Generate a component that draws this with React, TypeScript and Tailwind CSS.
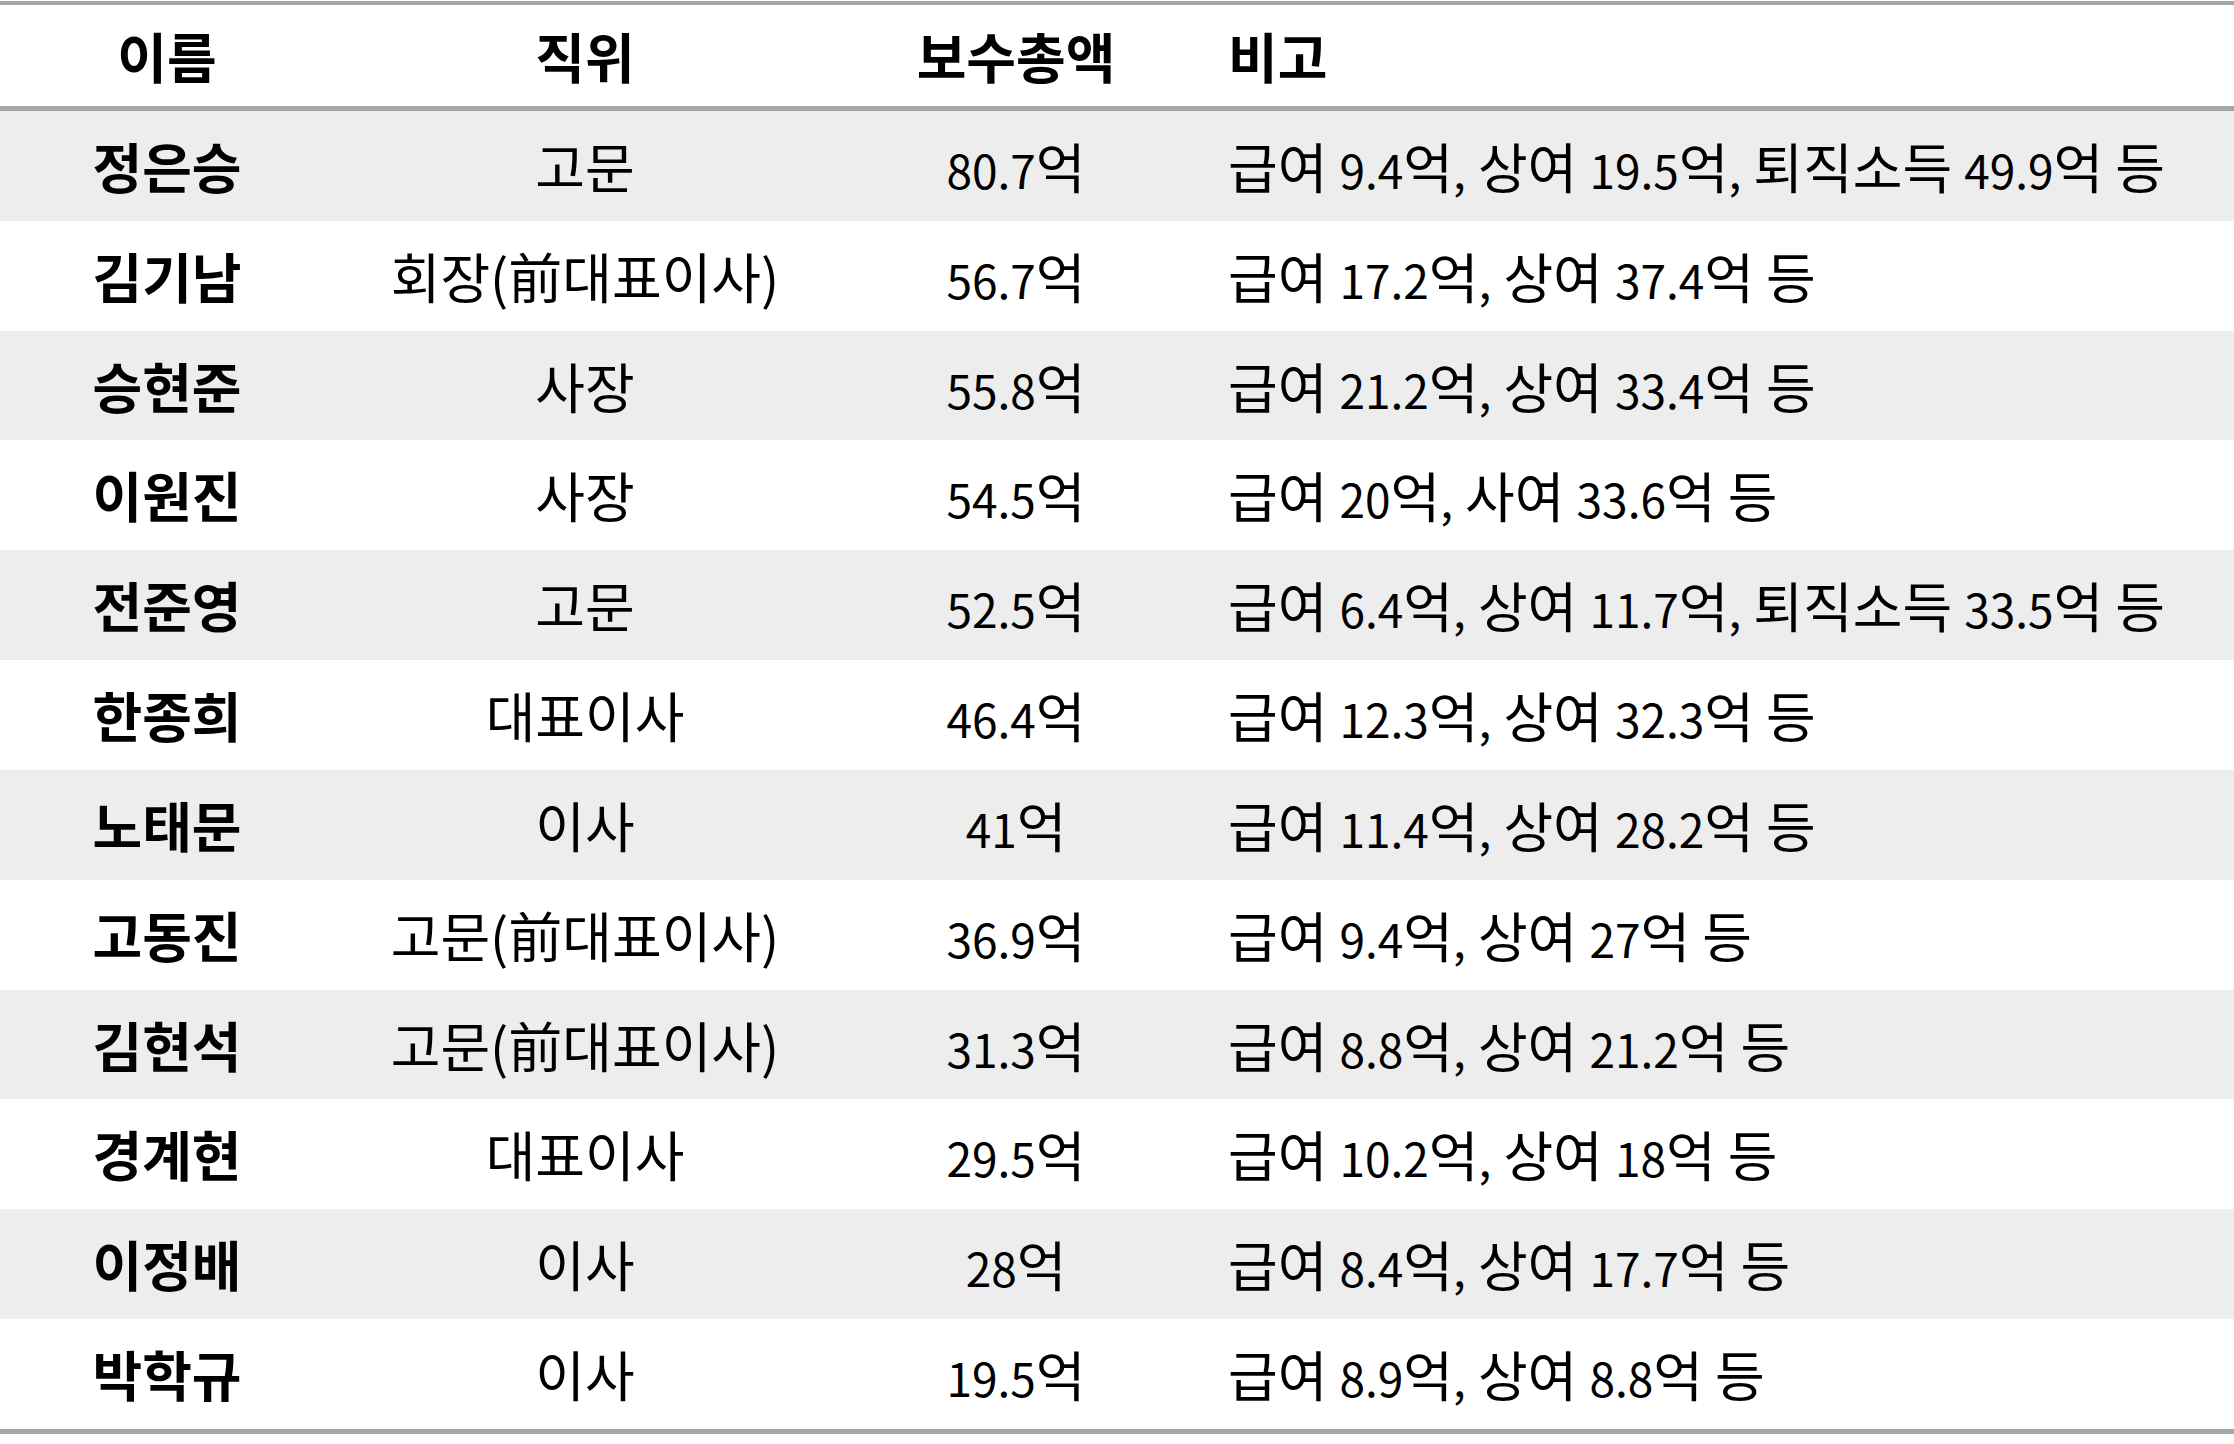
import React from 'react';

const rows = [
    { name: '정은승', title: '고문', total: '80.7억', note: '급여 9.4억, 상여 19.5억, 퇴직소득 49.9억 등' },
    { name: '김기남', title: '회장(前대표이사)', total: '56.7억', note: '급여 17.2억, 상여 37.4억 등' },
    { name: '승현준', title: '사장', total: '55.8억', note: '급여 21.2억, 상여 33.4억 등' },
    { name: '이원진', title: '사장', total: '54.5억', note: '급여 20억, 사여 33.6억 등' },
    { name: '전준영', title: '고문', total: '52.5억', note: '급여 6.4억, 상여 11.7억, 퇴직소득 33.5억 등' },
    { name: '한종희', title: '대표이사', total: '46.4억', note: '급여 12.3억, 상여 32.3억 등' },
    { name: '노태문', title: '이사', total: '41억', note: '급여 11.4억, 상여 28.2억 등' },
    { name: '고동진', title: '고문(前대표이사)', total: '36.9억', note: '급여 9.4억, 상여 27억 등' },
    { name: '김현석', title: '고문(前대표이사)', total: '31.3억', note: '급여 8.8억, 상여 21.2억 등' },
    { name: '경계현', title: '대표이사', total: '29.5억', note: '급여 10.2억, 상여 18억 등' },
    { name: '이정배', title: '이사', total: '28억', note: '급여 8.4억, 상여 17.7억 등' },
    { name: '박학규', title: '이사', total: '19.5억', note: '급여 8.9억, 상여 8.8억 등' },
];

const cols = 'grid grid-cols-[334px_502px_360px_1fr] items-center';

// digits in the source are set in a narrower latin face than the hangul
function Mixed({ text }: { text: string }) {
    const parts = text.split(/([0-9.,]+)/);
    return (
        <>
            {parts.map((p, i) =>
                /^[0-9.,]+$/.test(p) ? (
                    <span key={i} className="text-[46px]">{p}</span>
                ) : (
                    <React.Fragment key={i}>{p}</React.Fragment>
                )
            )}
        </>
    );
}

export default function App() {
    return (
        <div className="w-[2234px] h-[1444px] bg-white pt-px text-black text-[54px] leading-none font-['Noto_Sans_CJK_KR','Noto_Sans',sans-serif]">
            <div className="border-t-[4px] border-b-[5px] border-[#a6a6a6]">
                {/* header */}
                <div className={`${cols} h-[106px] font-bold border-b-[5px] border-[#a6a6a6]`}>
                    <div className="text-center">이름</div>
                    <div className="text-center">직위</div>
                    <div className="text-center">보수총액</div>
                    <div className="pl-8">비고</div>
                </div>

                {rows.map((row, i) => (
                    <div
                        key={row.name}
                        className={`${cols} h-[109.83px] ${i % 2 === 0 ? 'bg-[#ededed]' : 'bg-white'}`}
                    >
                        <div className="text-center font-bold">{row.name}</div>
                        <div className="text-center">{row.title}</div>
                        <div className="text-center"><Mixed text={row.total} /></div>
                        <div className="pl-8 whitespace-nowrap"><Mixed text={row.note} /></div>
                    </div>
                ))}
            </div>
        </div>
    );
}
